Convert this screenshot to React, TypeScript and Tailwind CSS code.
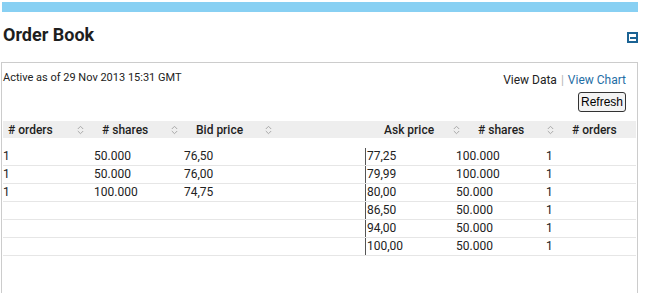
import React from "react";

const SortIcon = () => (
  <svg width="7" height="10" viewBox="0 0 7 10" className="shrink-0">
    <path d="M0.8 4 L3.5 1.3 L6.2 4" fill="none" stroke="#a8a8a8" strokeWidth="1" />
    <path d="M0.8 6 L3.5 8.7 L6.2 6" fill="none" stroke="#a8a8a8" strokeWidth="1" />
  </svg>
);

const HeadCell = ({ label, icon, last = false }: { label: string; icon: boolean; last?: boolean }) => (
  <div className={last ? "flex-1 flex items-center" : "w-[94px] shrink-0 flex items-center"}>
    <div className="w-[69px] shrink-0 whitespace-nowrap">{label}</div>
    {icon ? <SortIcon /> : null}
  </div>
);

const bids = [
  ["1", "50.000", "76,50"],
  ["1", "50.000", "76,00"],
  ["1", "100.000", "74,75"],
  ["", "", ""],
  ["", "", ""],
  ["", "", ""],
];
const asks = [
  ["77,25", "100.000", "1"],
  ["79,99", "100.000", "1"],
  ["80,00", "50.000", "1"],
  ["86,50", "50.000", "1"],
  ["94,00", "50.000", "1"],
  ["100,00", "50.000", "1"],
];

export default function App() {
  return (
    <div
      className="w-[645px] h-[293px] bg-white overflow-hidden pt-[2px] text-[#222]"
      style={{ fontFamily: "Roboto, 'Liberation Sans', sans-serif" }}
    >
      <div className="ml-[2px] w-[636px] h-[10px] bg-[#88d0f3]" />
      <div className="w-[638px] h-[50px] flex justify-between items-start pl-[3px]">
        <h2 className="mt-[12px] text-[18px] leading-[22px] font-bold text-[#1e1e1e]">Order Book</h2>
        <div className="mt-[20px] w-[11px] h-[11px] border-2 border-[#1b6394] flex items-center justify-center">
          <div className="w-[6px] h-[2px] bg-[#1b6394]" />
        </div>
      </div>
      <div className="ml-[1px] w-[637px] h-[231px] border-l border-r border-t border-[#cccccc] pl-[1px] pr-[1px]">
        <div className="flex justify-between">
          <div className="mt-[8px] text-[11px] leading-[14px]">Active as of 29 Nov 2013 15:31 GMT</div>
          <div className="flex flex-col items-end pr-[10px]">
            <div className="mt-[10px] text-[12px] leading-[14px] whitespace-nowrap">
              <span className="text-[#222]">View Data</span>
              <span className="text-[#b5b5b5] mx-[4px]">|</span>
              <span className="text-[#1f6ea5]">View Chart</span>
            </div>
            <button
              className="mt-[5px] h-[20px] w-[48px] p-0 border border-[#333] rounded-[3px] bg-[#f3f3f3] text-[12px] leading-[18px] text-black flex items-center justify-center"
              style={{ fontFamily: "'Liberation Sans', Arial, sans-serif" }}
            >
              Refresh
            </button>
          </div>
        </div>
        <div className="mt-[9px] h-[17px] bg-[#eeeeee] flex items-center pl-[5px] text-[12px] font-medium text-[#1e1e1e]">
          <HeadCell label="# orders" icon />
          <HeadCell label="# shares" icon />
          <HeadCell label="Bid price" icon />
          <HeadCell label="" icon={false} />
          <HeadCell label="Ask price" icon />
          <HeadCell label="# shares" icon />
          <HeadCell label="# orders" icon={false} last />
        </div>
        <div className="mt-[10px] text-[12px]">
          {bids.map((b, i) => (
            <div key={i} className="flex h-[18px] border-b border-[#e6e6e6]">
              <div className="w-[91px] shrink-0 leading-[17px]">{b[0]}</div>
              <div className="w-[90px] shrink-0 leading-[17px]">{b[1]}</div>
              <div className="w-[181px] shrink-0 leading-[17px]">{b[2]}</div>
              <div className="flex-1 flex border-l border-[#555]">
                <div className="w-[90px] shrink-0 pl-[1px] leading-[17px]">{asks[i][0]}</div>
                <div className="w-[90px] shrink-0 leading-[17px]">{asks[i][1]}</div>
                <div className="flex-1 leading-[17px]">{asks[i][2]}</div>
              </div>
            </div>
          ))}
        </div>
      </div>
    </div>
  );
}
